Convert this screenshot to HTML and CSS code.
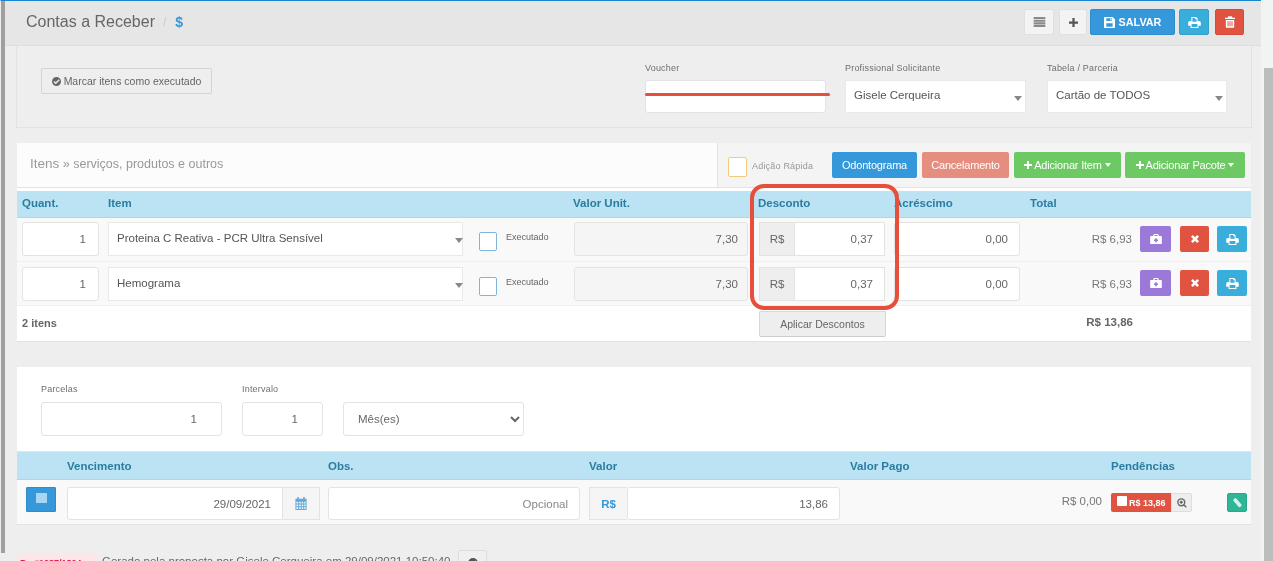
FILE: index.html
```html
<!DOCTYPE html>
<html lang="pt-BR">
<head>
<meta charset="utf-8">
<title>Contas a Receber</title>
<link rel="stylesheet" href="styles.css">
</head>
<body>
<svg class="defs" width="0" height="0" aria-hidden="true">
  <symbol id="i-print" viewBox="0 0 16 14"><path fill="currentColor" d="M4 0h6l2 2v3h2a2 2 0 0 1 2 2v4h-3v3H3v-3H0V7a2 2 0 0 1 2-2h2V0zm1.300 1.300V6h5.400V3H9V1.300H5.300zM4.300 9v3.700h7.400V9H4.300z"/></symbol>
  <symbol id="i-trash" viewBox="0 0 12 14"><path fill="currentColor" d="M4 0h4l1 2h3v1.500H0V2h3l1-2zM1 4.500h10V13a1 1 0 0 1-1 1H2a1 1 0 0 1-1-1V4.500zm2 1.500v6h1.200V6H3zm2.400 0v6h1.200V6H5.400zM7.800 6v6H9V6H7.800z"/></symbol>
  <symbol id="i-save" viewBox="0 0 14 14"><path fill="currentColor" d="M1 0h10l3 3v10a1 1 0 0 1-1 1H1a1 1 0 0 1-1-1V1a1 1 0 0 1 1-1zm2 1.500V5h7V1.500H3zm5 .5h1.300v2.300H8V2zM3 8v4.500h8V8H3z"/></symbol>
  <symbol id="i-list" viewBox="0 0 14 12"><path fill="currentColor" d="M0 0h14v2.500H0zM0 3.200h14v2.500H0zM0 6.400h14v2.500H0zM0 9.500h14V12H0z"/></symbol>
  <symbol id="i-plus" viewBox="0 0 12 12"><path fill="currentColor" d="M4.500 0h3v4.500H12v3H7.500V12h-3V7.500H0v-3h4.500z"/></symbol>
  <symbol id="i-check" viewBox="0 0 14 14"><path fill="currentColor" fill-rule="evenodd" d="M7 0a7 7 0 1 1 0 14A7 7 0 0 1 7 0zm3.500 3.600L5.800 8.300 3.700 6.200 2.200 7.700l3.600 3.600 6.200-6.200-1.500-1.500z"/></symbol>
  <symbol id="i-medkit" viewBox="0 0 14 12"><path fill="currentColor" fill-rule="evenodd" d="M4.500 0h5l1 2.500H13a1 1 0 0 1 1 1V11a1 1 0 0 1-1 1H1a1 1 0 0 1-1-1V3.500a1 1 0 0 1 1-1h2.500l1-2.500zM5.500 1.300L5 2.500h4l-.5-1.200h-3zM6 5v1.500H4.500v2H6V10h2V8.500h1.500v-2H8V5H6z"/></symbol>
  <symbol id="i-times" viewBox="0 0 10 10"><path fill="currentColor" d="M2.300 0L5 2.700 7.700 0 10 2.300 7.300 5 10 7.700 7.700 10 5 7.300 2.300 10 0 7.700 2.700 5 0 2.300z"/></symbol>
  <symbol id="i-calendar" viewBox="0 0 12 14"><path fill="currentColor" d="M2 0h1.600v2H8.400V0H10v2h2v12H0V2h2zM1 5v2h2V5zm3 0v2h1.700V5zm2.700 0v2h1.700V5zm2.700 0v2H11V5zM1 8v2h2V8zm3 0v2h1.700V8zm2.700 0v2h1.700V8zm2.700 0v2H11V8zM1 11v2h2v-2zm3 0v2h1.700v-2zm2.700 0v2h1.700v-2zm2.700 0v2H11v-2z"/></symbol>
  <symbol id="i-zoom" viewBox="0 0 14 14"><path fill="none" stroke="currentColor" stroke-width="2" d="M6 1.200a4.800 4.800 0 1 1 0 9.600 4.800 4.800 0 0 1 0-9.600zM9.500 9.500L13 13M6 3.800v4.400M3.800 6h4.400"/></symbol>
  <symbol id="i-pencil" viewBox="0 0 12 14"><path fill="currentColor" d="M3.500 0L11 8.500a2.500 2.500 0 0 1-.5 3.500 2.500 2.500 0 0 1-3.500 0L0 3.500 1 1z"/></symbol>
</svg>

<div class="app">
  <div class="edge"></div>
  <main class="main">
    <header class="topbar">
      <div class="crumbs">
        <h1 class="page-title">Contas a Receber</h1>
        <span class="slash">/</span>
        <span class="dollar">$</span>
      </div>
      <div class="actions">
        <button class="btn btn-light btn-sq"><svg class="ic ic-list"><use href="#i-list"/></svg></button>
        <button class="btn btn-light btn-plus"><svg class="ic ic-plus"><use href="#i-plus"/></svg></button>
        <button class="btn btn-blue btn-save"><svg class="ic ic-save"><use href="#i-save"/></svg>SALVAR</button>
        <button class="btn btn-cyan btn-print"><svg class="ic ic-print"><use href="#i-print"/></svg></button>
        <button class="btn btn-red btn-trash"><svg class="ic ic-trash"><use href="#i-trash"/></svg></button>
      </div>
    </header>

    <section class="filters">
      <button class="mark-btn"><svg class="ic ic-check"><use href="#i-check"/></svg>Marcar itens como executado</button>
      <div class="filter-fields">
        <div class="field field-voucher">
          <label class="tiny-label">Voucher</label>
          <input class="input" type="text">
          <span class="strike"></span>
        </div>
        <div class="field field-prof">
          <label class="tiny-label">Profissional Solicitante</label>
          <div class="fake-select">Gisele Cerqueira<span class="caret"></span></div>
        </div>
        <div class="field field-tab">
          <label class="tiny-label">Tabela / Parceria</label>
          <div class="fake-select">Cartão de TODOS<span class="caret"></span></div>
        </div>
      </div>
    </section>

    <section class="items">
      <div class="items-top">
        <div class="items-title"><span class="items-big">Itens</span> » serviços, produtos e outros</div>
        <div class="items-tools">
          <span class="quick-box"></span>
          <span class="quick-label">Adição Rápida</span>
          <button class="tbtn btn-blue t-odonto">Odontograma</button>
          <button class="tbtn btn-salmon t-cancel">Cancelamento</button>
          <button class="tbtn btn-green t-item"><svg class="ic ic-tplus"><use href="#i-plus"/></svg>Adicionar Item<span class="caret-w"></span></button>
          <button class="tbtn btn-green t-pack"><svg class="ic ic-tplus"><use href="#i-plus"/></svg>Adicionar Pacote<span class="caret-w"></span></button>
        </div>
      </div>

      <div class="thead items-head">
        <span>Quant.</span><span>Item</span><span>Valor Unit.</span><span>Desconto</span><span>Acréscimo</span><span>Total</span>
      </div>

      <div class="row">
        <input class="input num qty" value="1">
        <div class="fake-select item-sel">Proteina C Reativa - PCR Ultra Sensível<span class="caret"></span></div>
        <span class="exec-box"></span>
        <span class="exec-label">Executado</span>
        <input class="input num unit" value="7,30" readonly>
        <div class="group desc"><span class="addon">R$</span><input class="input num" value="0,37"></div>
        <input class="input num acr" value="0,00">
        <span class="line-total">R$ 6,93</span>
        <button class="rbtn btn-purple r-med"><svg class="ic ic-med"><use href="#i-medkit"/></svg></button>
        <button class="rbtn btn-red r-del"><svg class="ic ic-times"><use href="#i-times"/></svg></button>
        <button class="rbtn btn-cyan r-pr"><svg class="ic ic-print"><use href="#i-print"/></svg></button>
      </div>
      <div class="row">
        <input class="input num qty" value="1">
        <div class="fake-select item-sel">Hemograma<span class="caret"></span></div>
        <span class="exec-box"></span>
        <span class="exec-label">Executado</span>
        <input class="input num unit" value="7,30" readonly>
        <div class="group desc"><span class="addon">R$</span><input class="input num" value="0,37"></div>
        <input class="input num acr" value="0,00">
        <span class="line-total">R$ 6,93</span>
        <button class="rbtn btn-purple r-med"><svg class="ic ic-med"><use href="#i-medkit"/></svg></button>
        <button class="rbtn btn-red r-del"><svg class="ic ic-times"><use href="#i-times"/></svg></button>
        <button class="rbtn btn-cyan r-pr"><svg class="ic ic-print"><use href="#i-print"/></svg></button>
      </div>

      <div class="items-foot">
        <span class="count">2 itens</span>
        <button class="apply">Aplicar Descontos</button>
        <strong class="grand">R$ 13,86</strong>
      </div>
    </section>

    <section class="pay">
      <div class="pay-form">
        <div class="pf pf-parc">
          <label class="tiny-label">Parcelas</label>
          <input class="input num" value="1">
        </div>
        <div class="pf pf-int">
          <label class="tiny-label">Intervalo</label>
          <input class="input num" value="1">
        </div>
        <div class="pf pf-unit">
          <select class="native"><option>Mês(es)</option></select>
        </div>
      </div>
      <div class="thead pay-head">
        <span>Vencimento</span><span>Obs.</span><span>Valor</span><span>Valor Pago</span><span>Pendências</span>
      </div>
      <div class="pay-row">
        <button class="pay-toggle btn-blue"><span class="pay-square"></span></button>
        <div class="group g-date"><input class="input num" value="29/09/2021"><span class="addon addon-r"><svg class="ic ic-cal"><use href="#i-calendar"/></svg></span></div>
        <input class="input num obs" placeholder="Opcional">
        <div class="group g-val"><span class="addon addon-rs">R$</span><input class="input num" value="13,86"></div>
        <span class="paid">R$ 0,00</span>
        <span class="pend"><span class="pend-box"></span>R$ 13,86</span>
        <button class="pend-zoom"><svg class="ic ic-zoom"><use href="#i-zoom"/></svg></button>
        <button class="tag btn-teal"><svg class="ic ic-pencil"><use href="#i-pencil"/></svg></button>
      </div>
    </section>

    <div class="log">
      <span class="log-badge">Pr. #1087/1804</span>
      <span class="log-text">Gerado pela proposta por Gisele Cerqueira em 29/09/2021 10:50:40</span>
      <button class="log-btn"><svg class="ic ic-log"><use href="#i-check"/></svg></button>
    </div>

    <div class="highlight"></div>
  </main>
  <div class="scroll"><div class="thumb"></div></div>
</div>
</body>
</html>
```
FILE: styles.css
```css
* { box-sizing: border-box; }
html, body { margin: 0; height: 100%; overflow: hidden; }
body { font-family: "Liberation Sans", Arial, sans-serif; color: #555; background: #eee; font-size: 11.5px; }
.defs { position: absolute; }
button { font-family: inherit; cursor: pointer; padding: 0; }
.ic { display: block; flex: none; }

.app { display: flex; height: 561px; filter: blur(0.35px); }
.edge { width: 5px; height: 553px; flex: none; background: #a0a0a0; border-top: 1px solid #1b84cf; border-left: 1px solid #eee; }
.main { width: 1256px; flex: none; position: relative; background: #eee; overflow: hidden; border-top: 1px solid #1b84cf; }
.scroll { flex: 1; padding: 68px 0 0 3px; background: #f3f3f3; }
.thumb { height: 493px; background: #bdbdbd; }

.topbar { height: 45px; background: #e6e6e6; border-bottom: 1px solid #dedede; display: flex; justify-content: space-between; padding: 0 17px 0 21px; }
.crumbs { display: flex; align-items: center; gap: 8px; padding-bottom: 3px; }
.page-title { font-size: 16px; font-weight: 400; margin: 0; color: #666; }
.slash { color: #ccc; font-size: 12px; }
.dollar { color: #3498db; font-size: 14px; font-weight: 700; margin-left: 1px; }
.actions { display: flex; padding-top: 8px; align-items: flex-start; }
.btn { height: 26px; border-radius: 2px; border: 1px solid transparent; display: flex; align-items: center; justify-content: center; color: #fff; }
.btn-light { background: #f3f3f3; border-color: #e0e0e0; color: #666; }
.btn-sq { width: 30px; margin-right: 5px; }
.btn-plus { width: 28px; margin-right: 3px; }
.btn-save { width: 85px; margin-right: 4px; font-size: 10.800px; font-weight: 700; gap: 4px; }
.btn-print { width: 30px; margin-right: 6px; }
.btn-trash { width: 29px; }
.btn-blue { background: #3498db; border-color: #2e8ccb; color: #fff; }
.btn-cyan { background: #39aedb; border-color: #33a0ca; color: #fff; }
.btn-red { background: #e05340; border-color: #d34a38; color: #fff; }
.btn-salmon { background: #e58e80; border-color: #e0897b; color: #fff; }
.btn-green { background: #6cc963; border-color: #63bd5a; color: #fff; }
.btn-purple { background: #9b79d9; border-color: #8f6ece; color: #fff; }
.btn-teal { background: #2fb696; border-color: #2aa98a; color: #fff; }

.ic-list { width: 13px; height: 10px; color: #8a8a8a; }
.ic-plus { width: 9px; height: 9px; color: #555; }
.ic-save { width: 11px; height: 11px; }
.ic-print { width: 13px; height: 11px; }
.ic-trash { width: 10px; height: 12px; }
.ic-check { width: 9px; height: 9px; color: #666; }
.ic-tplus { width: 8px; height: 8px; }
.ic-med { width: 12px; height: 10px; }
.ic-times { width: 8px; height: 8px; }
.ic-cal { width: 12px; height: 13px; color: #5fa8dc; }
.ic-zoom { width: 10px; height: 10px; color: #666; }
.ic-pencil { width: 9px; height: 10px; color: #d6f2ea; }
.ic-log { width: 10px; height: 10px; color: #555; }

.filters { margin-left: 11px; width: 1236px; height: 82px; border: 1px solid #e2e2e2; border-top: 0; display: flex; justify-content: space-between; position: relative; }
.mark-btn { margin: 22px 0 0 24px; width: 171px; height: 26px; background: #eee; border: 1px solid #d4d4d4; border-radius: 2px; color: #666; font-size: 10.500px; display: flex; align-items: center; justify-content: center; gap: 3px; }
.filter-fields { display: flex; padding: 17px 24px 0 0; }
.field { width: 181px; display: flex; flex-direction: column; position: relative; }
.field-voucher { margin-right: 19px; }
.field-prof { margin-right: 21px; }
.field-tab { width: 180px; }
.tiny-label { font-size: 9px; color: #6f6f6f; height: 17px; line-height: 10px; letter-spacing: .2px; }
.input { display: block; width: 100%; height: 33px; background: #fff; border: 1px solid #e3e3e3; border-radius: 3px; color: #666; font-family: inherit; font-size: 11.500px; padding: 0 12px; outline: 0; }
.num { text-align: right; }
.input[readonly] { background: #f5f5f5; }
.input::placeholder { color: #888; opacity: 1; }
.strike { position: absolute; left: 0; right: -4px; top: 30px; height: 3px; border-radius: 2px; background: #e74f3c; }
.fake-select { position: relative; height: 33px; background: #fff; border: 1px solid #e9e9e9; color: #555; font-size: 11.500px; line-height: 29px; padding-left: 8px; }
.caret { position: absolute; right: 3px; top: 15px; width: 0; height: 0; border: 4px solid transparent; border-top: 5px solid #888; border-bottom: 0; }

.items { margin: 15px 0 0 12px; width: 1234px; height: 199px; background: #fff; border-bottom: 1px solid #e2e2e2; }
.items-top { height: 45px; display: flex; background: #fafafa; border-bottom: 1px solid #e2e2e2; }
.items-title { width: 700px; padding: 13px 0 0 13px; color: #999; font-size: 12.500px; background: #fcfcfc; }
.items-big { font-size: 13.500px; }
.items-tools { flex: 1; display: flex; align-items: flex-start; background: #f4f4f4; border-left: 1px solid #e2e2e2; padding: 9px 0 0 10px; }
.quick-box { width: 19px; height: 20px; margin-top: 5px; background: #fff; border: 1px solid #f5c97a; border-radius: 2px; }
.quick-label { font-size: 9px; color: #999; margin: 9px 0 0 5px; width: 80px; letter-spacing: .2px; }
.tbtn { height: 26px; border: 1px solid transparent; border-radius: 2px; font-size: 11px; color: #fff; display: flex; align-items: center; justify-content: center; gap: 2px; letter-spacing: -.2px; }
.t-odonto { width: 85px; margin-right: 5px; }
.t-cancel { width: 87px; margin-right: 5px; }
.t-item { width: 107px; margin-right: 4px; }
.t-pack { width: 120px; }
.caret-w { width: 0; height: 0; border: 3px solid transparent; border-top: 4px solid #fff; border-bottom: 0; margin-left: 1px; }

.thead { background: #bce3f3; border-bottom: 1px solid #a6d9f0; color: #2a7d9f; font-weight: 700; font-size: 11.500px; display: grid; align-items: center; }
.items-head { height: 27px; margin-top: 3px; padding-left: 5px; grid-template-columns: 86px 465px 185px 136px 136px 1fr; padding-bottom: 2px; }

.row { height: 44px; background: #f9f9f9; border-bottom: 1px solid #f0f0f0; display: flex; align-items: flex-start; padding: 4px 0 0 5px; }
.row + .row { padding-top: 5px; }
.row + .row .rbtn { margin-top: 3px; }
.qty { width: 77px; height: 34px; margin-right: 9px; }
.item-sel { width: 355px; height: 34px; margin-right: 16px; line-height: 30px; }
.item-sel .caret { right: -1px; top: 15px; }
.exec-box { width: 18px; height: 19px; margin: 10px 9px 0 0; background: #fff; border: 1px solid #7fb7dc; border-radius: 2px; }
.exec-label { width: 68px; font-size: 9px; color: #666; margin-top: 10px; }
.unit { width: 174px; height: 34px; margin-right: 11px; padding-right: 9px; }
.group { display: flex; }
.desc { width: 126px; height: 34px; margin-right: 9px; border: 1px solid #e3e3e3; }
.desc .input { border: 0; height: 32px; flex: 1; min-width: 0; border-radius: 0; padding-right: 11px; }
.addon { background: #eee; color: #666; display: flex; align-items: center; justify-content: center; font-size: 11.500px; }
.desc .addon { width: 35px; border-right: 1px solid #e3e3e3; }
.acr { width: 126px; height: 34px; padding-right: 11px; }
.line-total { width: 112px; text-align: right; color: #777; font-size: 11.500px; margin-top: 11px; }
.rbtn { height: 26px; border: 1px solid transparent; border-radius: 2px; display: flex; align-items: center; justify-content: center; margin-top: 4px; }
.r-med { width: 31px; margin-left: 8px; margin-right: 9px; }
.r-del { width: 29px; margin-right: 8px; }
.r-pr { width: 30px; }

.items-foot { height: 35px; display: flex; align-items: flex-start; padding-left: 5px; }
.count { width: 737px; font-weight: 700; font-size: 11px; color: #666; margin-top: 11px; }
.apply { width: 127px; height: 26px; margin-top: 5px; background: #eee; border: 1px solid #d8d8d8; border-bottom-color: #ccc; border-radius: 2px; color: #666; font-size: 10.500px; }
.grand { width: 247px; text-align: right; font-size: 11.500px; color: #666; margin-top: 10px; }

.pay { margin: 25px 0 0 12px; width: 1234px; height: 158px; background: #fff; border-bottom: 1px solid #e2e2e2; }
.pay-form { height: 84px; display: flex; padding: 17px 0 0 24px; gap: 20px; }
.pf { display: flex; flex-direction: column; }
.pf .tiny-label { height: 18px; }
.pf .input { height: 34px; padding-right: 24px; }
.pf-parc { width: 181px; }
.pf-int { width: 81px; }
.pf-unit { width: 181px; padding-top: 18px; }
.native { width: 100%; height: 34px; background: #fff; border: 1px solid #e3e3e3; border-radius: 3px; color: #666; font-family: inherit; font-size: 11.500px; padding-left: 10px; }
.pay-head { height: 29px; padding-left: 50px; grid-template-columns: 261px 261px 261px 261px 1fr; border-top: 1px solid #e5e5e5; }
.pay-row { height: 44px; background: #f9f9f9; display: flex; align-items: flex-start; padding: 7px 0 0 9px; }
.pay-toggle { width: 30px; height: 25px; border: 1px solid #2e8ccb; border-radius: 1px; margin-right: 11px; display: flex; align-items: center; justify-content: center; }
.pay-square { width: 11px; height: 10px; background: #a9d4f2; margin-top: -3px; }
.g-date { width: 253px; height: 33px; margin-right: 8px; }
.g-date .input { flex: 1; min-width: 0; border-radius: 3px 0 0 3px; height: 33px; padding-right: 11px; }
.addon-r { width: 37px; background: #f5f5f5; border: 1px solid #e3e3e3; border-left: 0; }
.obs { width: 252px; height: 33px; margin-right: 9px; padding-right: 11px; }
.g-val { width: 251px; height: 33px; margin-right: 160px; }
.addon-rs { width: 38px; background: #f5f5f5; color: #3498db; font-weight: 700; border: 1px solid #e3e3e3; border-right: 0; }
.g-val .input { flex: 1; min-width: 0; height: 33px; padding-right: 11px; }
.paid { width: 102px; margin-top: 8px; text-align: right; color: #777; }
.pend { margin: 6px 0 0 9px; width: 60px; height: 19px; background: #e05340; border-radius: 2px 0 0 2px; color: #fff; font-size: 9px; font-weight: 700; display: flex; align-items: center; gap: 2px; padding-left: 6px; }
.pend-box { width: 10px; height: 10px; background: #fff; border-radius: 1px; margin-top: -4px; }
.pend-zoom { margin-top: 6px; width: 21px; height: 19px; background: #eee; border: 1px solid #ddd; border-radius: 0 2px 2px 0; display: flex; align-items: center; justify-content: center; }
.tag { margin: 6px 0 0 35px; width: 20px; height: 19px; border: 1px solid #2aa98a; border-radius: 2px; display: flex; align-items: center; justify-content: center; }

.log { margin: 25px 0 0 12px; display: flex; align-items: flex-start; height: 30px; }
.log-badge { width: 81px; height: 18px; margin-top: 4px; background: #fde6ea; color: #e8174b; font-size: 9px; font-weight: 700; border-radius: 2px; padding: 4px 0 0 3px; white-space: nowrap; }
.log-text { margin: 5px 0 0 4px; width: 356px; white-space: nowrap; color: #666; font-size: 11.500px; }
.log-btn { width: 29px; height: 26px; background: #f0f0f0; border: 1px solid #ddd; border-radius: 2px; display: flex; align-items: center; justify-content: center; }

.highlight { position: absolute; left: 745px; top: 183px; width: 149px; height: 126px; border: 4px solid #e74f3c; border-radius: 14px; pointer-events: none; }
```
